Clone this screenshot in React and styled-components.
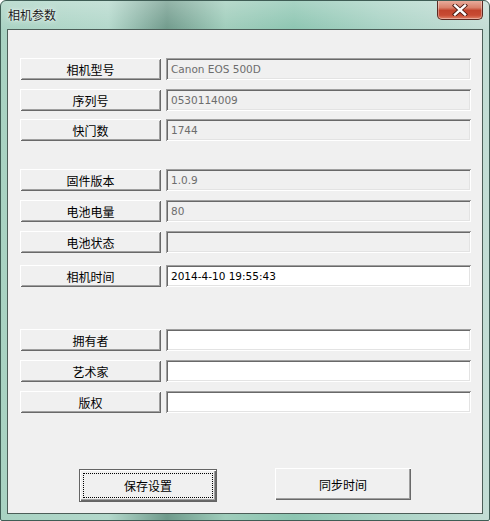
import React from "react";
import styled, { createGlobalStyle } from "styled-components";

const GlobalStyle = createGlobalStyle`
  html, body {
    margin: 0;
    padding: 0;
    background: #ffffff;
  }
`;

const Frame = styled.div`
  width: 490px;
  height: 521px;
  box-sizing: border-box;
  display: flex;
  flex-direction: column;
  border: 1px solid #3f5d55;
  border-radius: 6px 6px 2px 2px;
  background:
    linear-gradient(180deg, rgba(255, 255, 255, 0.25) 0px, rgba(255, 255, 255, 0) 30px),
    linear-gradient(90deg, #a8d2c2 0%, #b3d8cb 22%, #6f9a8b 34%, #9fcdbb 46%, #8cc5b1 60%, #a9d3c5 78%, #c3ddd5 100%);
  font-family: "Noto Sans CJK SC", "Liberation Sans", sans-serif;
  overflow: hidden;
`;

const TitleBar = styled.div`
  height: 28px;
  display: flex;
  align-items: flex-start;
  padding-left: 7px;
`;

const Title = styled.div`
  margin-top: 6px;
  font-size: 12px;
  line-height: 16px;
  color: #1a1a1a;
  text-shadow: 0 0 6px rgba(255, 255, 255, 0.9), 0 0 2px rgba(255, 255, 255, 0.9);
`;

const CloseButton = styled.div`
  margin-left: auto;
  margin-right: 6px;
  margin-top: -1px;
  width: 44px;
  height: 19px;
  display: flex;
  align-items: center;
  justify-content: center;
  border: 1px solid #5b2a22;
  border-top: none;
  border-radius: 0 0 5px 5px;
  background: linear-gradient(180deg, #eab1a2 0%, #d9816b 40%, #c2432c 55%, #c84b33 80%, #e08268 100%);
  box-shadow: inset 0 0 0 1px rgba(255, 255, 255, 0.35);
`;

const Client = styled.div`
  flex: 1;
  margin: 0 6px 6px 6px;
  display: flex;
  flex-direction: column;
  border: 1px solid #4c5e58;
  background: #f0f0f0;
  padding: 28px 11px 11px 12px;
`;

const Row = styled.div`
  display: flex;
  align-items: stretch;
  height: 22px;
  margin-top: ${(p) => p.$gap}px;
`;

const LabelButton = styled.div`
  width: 141px;
  flex-shrink: 0;
  display: flex;
  align-items: center;
  justify-content: center;
  background: #f0f0f0;
  font-size: 12px;
  color: #000;
  box-shadow:
    inset 1px 1px 0 #ffffff,
    inset -1px -1px 0 #696969,
    inset 2px 2px 0 #f0f0f0,
    inset -2px -2px 0 #a0a0a0;
`;

const Field = styled.div`
  flex: 1;
  margin-left: 5px;
  display: flex;
  align-items: center;
  padding-left: 5px;
  font-family: "DejaVu Sans", "Liberation Sans", sans-serif;
  font-size: 10.5px;
  color: ${(p) => (p.$editable ? "#000000" : "#6d6d6d")};
  background: ${(p) => (p.$editable ? "#ffffff" : "#f0f0f0")};
  box-shadow:
    inset 1px 1px 0 #a0a0a0,
    inset -1px -1px 0 #ffffff,
    inset 2px 2px 0 #696969,
    inset -2px -2px 0 #e3e3e3;
`;

const Footer = styled.div`
  margin-top: auto;
  display: flex;
  align-items: flex-start;
  padding-left: 59px;
  gap: 57px;
`;

const PushButton = styled.div`
  width: 138px;
  height: ${(p) => (p.$default ? 33 : 34)}px;
  margin-top: ${(p) => (p.$default ? 2 : 0)}px;
  box-sizing: border-box;
  display: flex;
  align-items: center;
  justify-content: center;
  font-size: 12px;
  color: #000;
  background: #f0f0f0;
  border: 1px solid ${(p) => (p.$default ? "#646464" : "transparent")};
  box-shadow:
    inset 1px 1px 0 #ffffff,
    inset -1px -1px 0 #696969,
    inset -2px -2px 0 #a0a0a0;
  padding: 3px;
`;

const FocusRing = styled.div`
  flex: 1;
  align-self: stretch;
  display: flex;
  align-items: center;
  justify-content: center;
  border: 1px dotted #000;
`;

const rows = [
  { label: "相机型号", value: "Canon EOS 500D", gap: 0 },
  { label: "序列号", value: "0530114009", gap: 9 },
  { label: "快门数", value: "1744", gap: 8 },
  { label: "固件版本", value: "1.0.9", gap: 28 },
  { label: "电池电量", value: "80", gap: 9 },
  { label: "电池状态", value: "", gap: 9 },
  { label: "相机时间", value: "2014-4-10 19:55:43", gap: 12, editable: true },
  { label: "拥有者", value: "", gap: 42, editable: true },
  { label: "艺术家", value: "", gap: 9, editable: true },
  { label: "版权", value: "", gap: 9, editable: true },
];

const CloseIcon = () => (
  <svg width="16" height="12" viewBox="0 0 16 12">
    <path d="M3 1.5 L13 10.5 M13 1.5 L3 10.5" stroke="#4a1a12" strokeWidth="4.2" strokeLinecap="square" />
    <path d="M3 1.5 L13 10.5 M13 1.5 L3 10.5" stroke="#ffffff" strokeWidth="2.4" strokeLinecap="square" />
  </svg>
);

export default function App() {
  return (
    <>
      <GlobalStyle />
      <Frame>
        <TitleBar>
          <Title>相机参数</Title>
          <CloseButton>
            <CloseIcon />
          </CloseButton>
        </TitleBar>
        <Client>
          {rows.map((r) => (
            <Row key={r.label} $gap={r.gap}>
              <LabelButton>{r.label}</LabelButton>
              <Field $editable={r.editable}>{r.value}</Field>
            </Row>
          ))}
          <Footer>
            <PushButton $default>
              <FocusRing>保存设置</FocusRing>
            </PushButton>
            <PushButton>同步时间</PushButton>
          </Footer>
        </Client>
      </Frame>
    </>
  );
}
